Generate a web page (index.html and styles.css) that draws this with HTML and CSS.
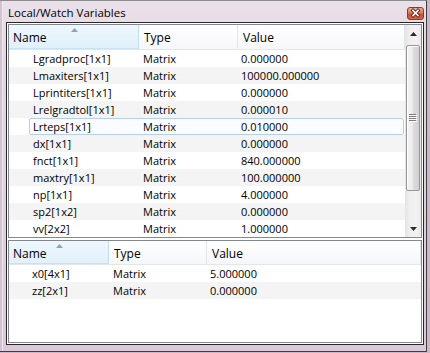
FILE: index.html
```html
<!DOCTYPE html>
<html>
<head>
<meta charset="utf-8">
<link rel="stylesheet" href="styles.css">
</head>
<body>
<div class="window">
  <div class="titlebar">
    <span class="title">Local/Watch Variables</span>
    <div class="close">
      <svg width="17" height="13" viewBox="0 0 17 13">
        <defs>
          <linearGradient id="cg" x1="0" y1="0" x2="0" y2="1">
            <stop offset="0" stop-color="#f0b39d"/>
            <stop offset="0.45" stop-color="#dc7a5c"/>
            <stop offset="0.55" stop-color="#cc4f2f"/>
            <stop offset="1" stop-color="#d9684a"/>
          </linearGradient>
        </defs>
        <rect x="0.5" y="0.5" width="16" height="12" rx="2.5" fill="url(#cg)" stroke="#8d3a28"/>
        <path d="M6 3.5 L11 8.5 M11 3.5 L6 8.5" stroke="#5a2a22" stroke-width="3.4" stroke-linecap="square"/>
        <path d="M6 3.5 L11 8.5 M11 3.5 L6 8.5" stroke="#ffffff" stroke-width="1.6" stroke-linecap="square"/>
      </svg>
    </div>
  </div>
  <div class="client">
    <div class="panel panel-top">
      <div class="list">
        <div class="header cols-top">
          <div class="hcell sorted">Name
            <svg class="sort" width="7" height="4" viewBox="0 0 7 4"><path d="M0 4 L3.5 0 L7 4 Z" fill="#8aa6bf"/></svg>
          </div>
          <div class="hcell">Type</div>
          <div class="hcell">Value</div>
        </div>
        <div class="rows">
          <div class="row cols-top"><span class="c-name">Lgradproc[1x1]</span><span class="c-type">Matrix</span><span class="c-val">0.000000</span></div>
          <div class="row cols-top"><span class="c-name">Lmaxiters[1x1]</span><span class="c-type">Matrix</span><span class="c-val">100000.000000</span></div>
          <div class="row cols-top"><span class="c-name">Lprintiters[1x1]</span><span class="c-type">Matrix</span><span class="c-val">0.000000</span></div>
          <div class="row cols-top"><span class="c-name">Lrelgradtol[1x1]</span><span class="c-type">Matrix</span><span class="c-val">0.000010</span></div>
          <div class="row cols-top focus"><span class="c-name">Lrteps[1x1]</span><span class="c-type">Matrix</span><span class="c-val">0.010000</span></div>
          <div class="row cols-top"><span class="c-name">dx[1x1]</span><span class="c-type">Matrix</span><span class="c-val">0.000000</span></div>
          <div class="row cols-top"><span class="c-name">fnct[1x1]</span><span class="c-type">Matrix</span><span class="c-val">840.000000</span></div>
          <div class="row cols-top"><span class="c-name">maxtry[1x1]</span><span class="c-type">Matrix</span><span class="c-val">100.000000</span></div>
          <div class="row cols-top"><span class="c-name">np[1x1]</span><span class="c-type">Matrix</span><span class="c-val">4.000000</span></div>
          <div class="row cols-top"><span class="c-name">sp2[1x2]</span><span class="c-type">Matrix</span><span class="c-val">0.000000</span></div>
          <div class="row cols-top"><span class="c-name">vv[2x2]</span><span class="c-type">Matrix</span><span class="c-val">1.000000</span></div>
        </div>
      </div>
      <div class="scrollbar">
        <div class="sb-btn"><svg width="7" height="4" viewBox="0 0 7 4"><path d="M0 4 L3.5 0 L7 4 Z" fill="#2b2b2b"/></svg></div>
        <div class="thumb">
          <svg width="8" height="8" viewBox="0 0 8 8">
            <path d="M0 0.5 H7 M0 2.5 H7 M0 4.5 H7 M0 6.5 H7" stroke="#7d7d7d" stroke-width="1"/>
            <path d="M1 1.5 H8 M1 3.5 H8 M1 5.5 H8 M1 7.5 H8" stroke="#ffffff" stroke-width="1"/>
          </svg>
        </div>
        <div class="sb-space"></div>
        <div class="sb-btn"><svg width="7" height="4" viewBox="0 0 7 4"><path d="M0 0 L3.5 4 L7 0 Z" fill="#2b2b2b"/></svg></div>
      </div>
    </div>
    <div class="panel panel-bottom">
      <div class="list">
        <div class="header cols-bottom short">
          <div class="hcell sorted">Name
            <svg class="sort" width="7" height="4" viewBox="0 0 7 4"><path d="M0 4 L3.5 0 L7 4 Z" fill="#8aa6bf"/></svg>
          </div>
          <div class="hcell">Type</div>
          <div class="hcell">Value</div>
        </div>
        <div class="rows">
          <div class="row cols-bottom"><span class="c-name">x0[4x1]</span><span class="c-type">Matrix</span><span class="c-val">5.000000</span></div>
          <div class="row cols-bottom"><span class="c-name">zz[2x1]</span><span class="c-type">Matrix</span><span class="c-val">0.000000</span></div>
        </div>
      </div>
    </div>
  </div>
</div>
</body>
</html>
```

FILE: styles.css
```css
html, body {
  margin: 0;
  padding: 0;
}
body {
  width: 430px;
  height: 353px;
  overflow: hidden;
  background: #cdb8c9;
  font-family: "Open Sans", "Noto Sans", sans-serif;
  color: #000;
}
.window {
  box-sizing: border-box;
  width: 427px;
  height: 352px;
  display: flex;
  flex-direction: column;
  padding: 0 2px 6px 6px;
  border-top: 1px solid #8c8c8c;
  border-right: 1px solid #3e3e3e;
  border-bottom: 1px solid #3e3e3e;
  background: linear-gradient(to bottom, #ebe1ea 0px, #e3d6e1 60px, #dacad7 100%);
  box-shadow: inset 2px 0 0 #d3c2d0, inset 3px 0 0 #efe7ee;
}
.titlebar {
  height: 21px;
  flex: none;
  display: flex;
  justify-content: space-between;
  align-items: flex-start;
}
.title {
  margin: 4px 0 0 2px;
  font-size: 11.5px;
  line-height: 16px;
  color: #000;
}
.close {
  margin-top: 6px;
  width: 17px;
  height: 13px;
}
.close svg { display: block; }
.client {
  flex: 1;
  box-sizing: border-box;
  border: 1px solid #262626;
  padding: 1px;
  background: #fff;
  display: flex;
  flex-direction: column;
  gap: 2px;
}
.panel {
  box-sizing: border-box;
  border: 1px solid #828790;
  display: flex;
  overflow: hidden;
  background: #fff;
}
.panel-top { height: 214px; flex: none; }
.panel-bottom { flex: 1; }
.list {
  flex: 1;
  min-width: 0;
  overflow: hidden;
}
.cols-top {
  display: grid;
  grid-template-columns: 130px 99px 1fr;
}
.cols-bottom {
  display: grid;
  grid-template-columns: 100px 98px 1fr;
}
.header {
  height: 25px;
  box-sizing: border-box;
  border-bottom: 1px solid #e3e6ea;
  background: linear-gradient(to bottom, #ffffff, #f6f7f9);
  font-size: 12px;
}
.header.short { height: 24px; }
.hcell {
  position: relative;
  box-sizing: border-box;
  border-right: 1px solid #e3e5e8;
  padding: 5px 0 0 5px;
  line-height: 16px;
}
.hcell.sorted {
  padding-left: 4px;
  background: linear-gradient(to bottom, #eef7fd, #e1f0fb);
  border-right: 1px solid #bfe0f5;
  border-bottom: 1px solid #c6e3f6;
}
.sort {
  position: absolute;
  top: 3px;
  left: 50%;
  margin-left: -3px;
}
.row {
  height: 17px;
  line-height: 17px;
  font-size: 11px;
  position: relative;
  white-space: nowrap;
}
.rows .row:nth-child(even) { background: #f4f4f4; }
.c-name { padding-left: 24px; }
.cols-bottom .c-name { padding-left: 23px; }
.c-type { padding-left: 4px; }
.c-val { padding-left: 3px; }
.row.focus::before {
  content: "";
  position: absolute;
  left: 20px;
  right: 1px;
  top: 0;
  bottom: 0;
  border: 1px solid #b3d0f0;
  border-radius: 2px;
  background: rgba(246, 250, 255, 0.6);
}
.row span { position: relative; }
.scrollbar {
  width: 16px;
  flex: none;
  display: flex;
  flex-direction: column;
  background: linear-gradient(to right, #e4e4e4, #efefef 30%, #f2f2f2 70%, #eaeaea);
}
.sb-btn {
  height: 17px;
  flex: none;
  display: flex;
  align-items: center;
  justify-content: center;
}
.sb-btn svg { display: block; }
.thumb {
  margin: 3px 1px 0 1px;
  height: 146px;
  flex: none;
  box-sizing: border-box;
  border: 1px solid #979797;
  border-radius: 2px;
  background: linear-gradient(to right, #f4f4f4 0%, #ececec 45%, #dcdcdc 55%, #d0d0d0 100%);
  box-shadow: inset 1px 1px 0 #ffffff;
  display: flex;
  align-items: center;
  justify-content: center;
}
.thumb svg { display: block; }
.sb-space { flex: 1; }
```
